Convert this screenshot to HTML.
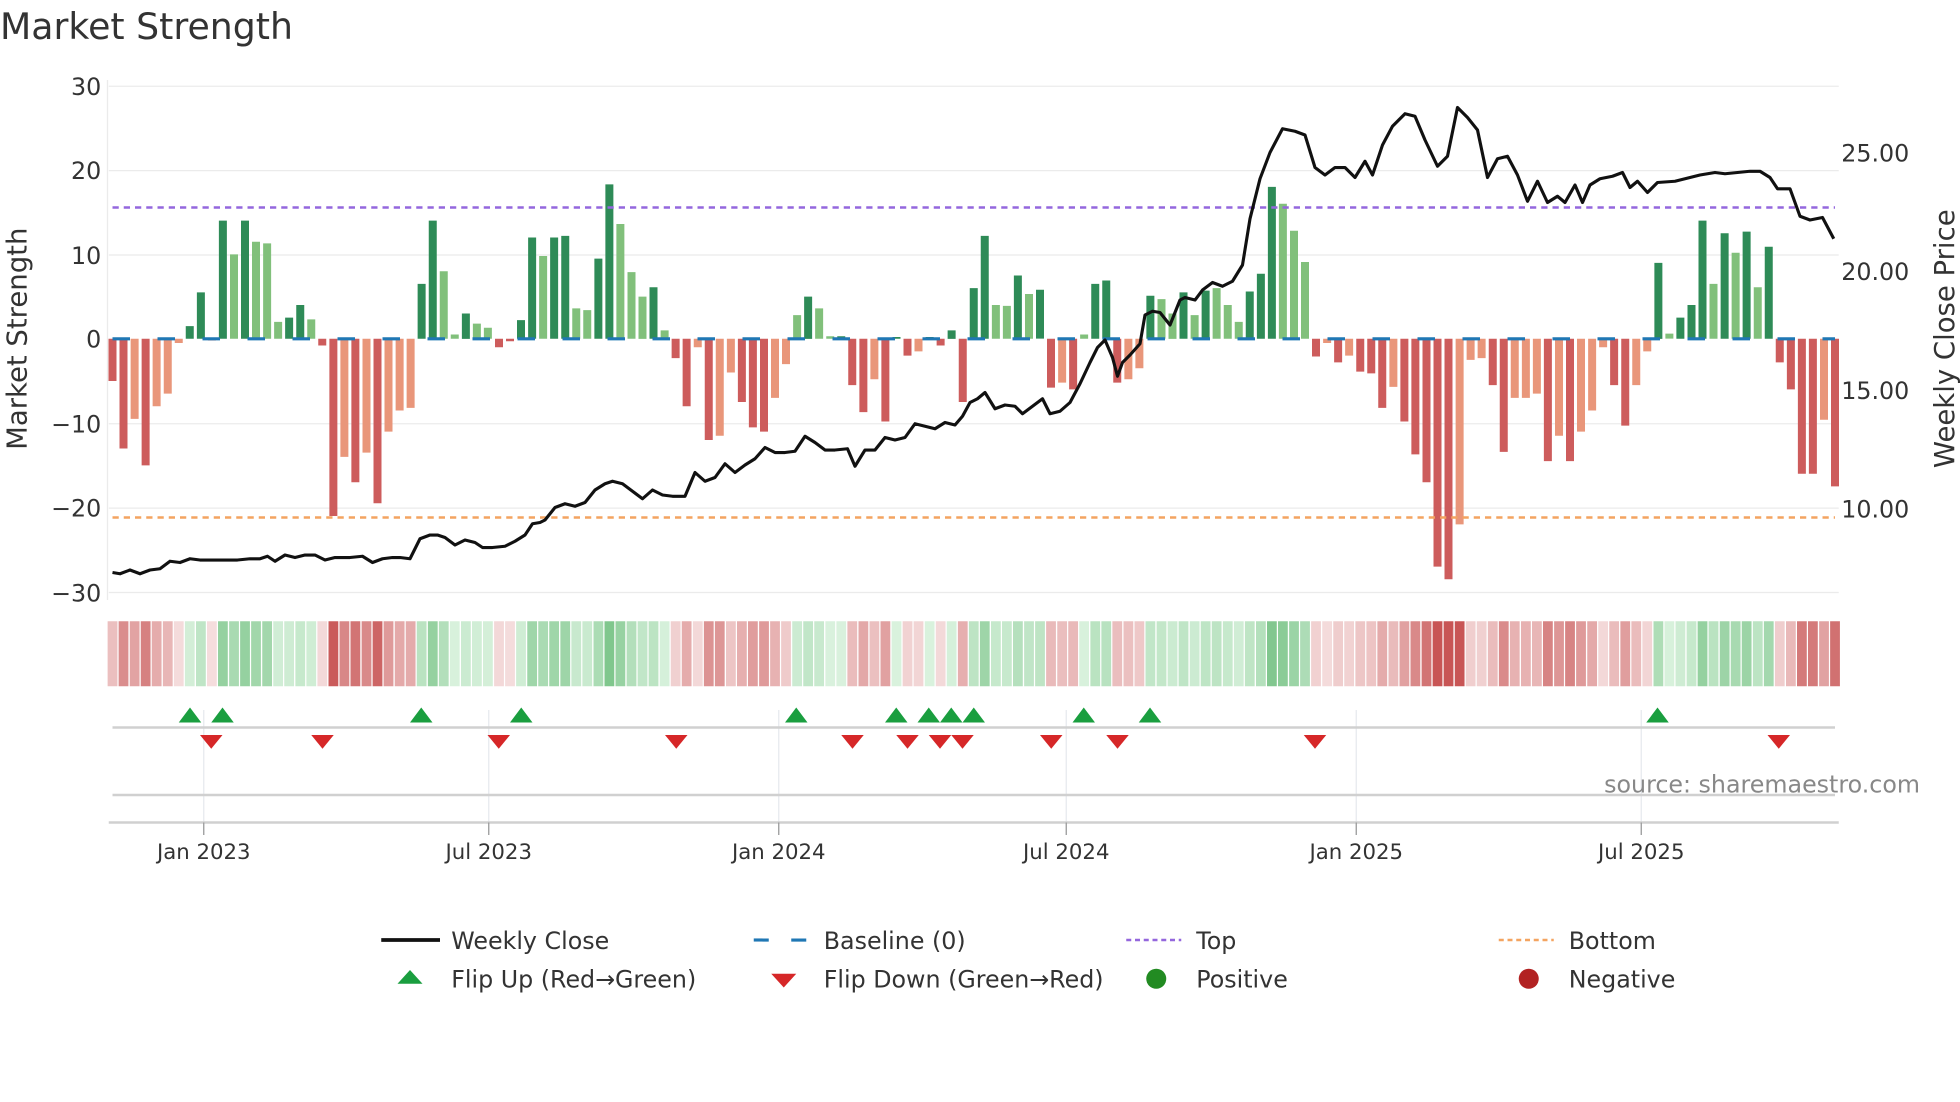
<!DOCTYPE html>
<html><head><meta charset="utf-8"><style>
html,body{margin:0;padding:0;background:#fff;}
svg{display:block;font-family:"DejaVu Sans","Liberation Sans",sans-serif;}
</style></head><body>
<svg id="s" width="1960" height="1102" viewBox="0 0 1568 881.6" xmlns="http://www.w3.org/2000/svg">
<text x="0" y="31" font-size="29" fill="#333">Market Strength</text>
<g stroke="#ebebeb" stroke-width="1">
<line x1="87" x2="1471" y1="69" y2="69"/><line x1="87" x2="1471" y1="136.5" y2="136.5"/>
<line x1="87" x2="1471" y1="204" y2="204"/><line x1="87" x2="1471" y1="339" y2="339"/>
<line x1="87" x2="1471" y1="406.5" y2="406.5"/><line x1="87" x2="1471" y1="474" y2="474"/>
<line x1="86" x2="86" y1="64" y2="480"/>
</g>
<g font-size="19" fill="#333" text-anchor="end">
<text x="81" y="76">30</text><text x="81" y="143">20</text><text x="81" y="211">10</text>
<text x="81" y="278">0</text><text x="81" y="346">−10</text><text x="81" y="413">−20</text><text x="81" y="481">−30</text>
</g>
<g font-size="19" fill="#333">
<text x="1473" y="129">25.00</text><text x="1473" y="224">20.00</text><text x="1473" y="319">15.00</text><text x="1473" y="414">10.00</text>
</g>
<text transform="translate(21,271) rotate(-90)" font-size="22" fill="#333" text-anchor="middle">Market Strength</text>
<text transform="translate(1563,271) rotate(-90)" font-size="22" fill="#333" text-anchor="middle">Weekly Close Price</text>
<g id="bars"></g>
<line x1="90" x2="1468" y1="271" y2="271" stroke="#1f77b4" stroke-width="2.5" stroke-dasharray="14,22"/>
<line x1="90" x2="1468" y1="166" y2="166" stroke="#9467dd" stroke-width="2" stroke-dasharray="5,4"/>
<line x1="90" x2="1468" y1="414" y2="414" stroke="#f4a460" stroke-width="2" stroke-dasharray="5,4"/>
<polyline id="price" fill="none" stroke="#111" stroke-width="2.5" stroke-linejoin="round"/>
<g id="strip"></g>
<g stroke="#e6e9ee" stroke-width="1">
<line x1="163" x2="163" y1="568" y2="668"/><line x1="391" x2="391" y1="568" y2="668"/>
<line x1="623" x2="623" y1="568" y2="668"/><line x1="853" x2="853" y1="568" y2="668"/>
<line x1="1085" x2="1085" y1="568" y2="668"/><line x1="1313" x2="1313" y1="568" y2="668"/>
</g>
<line x1="90" x2="1468" y1="582" y2="582" stroke="#d0d0d0" stroke-width="2"/>
<line x1="90" x2="1468" y1="636" y2="636" stroke="#d0d0d0" stroke-width="2"/>
<line x1="87" x2="1471" y1="658" y2="658" stroke="#d0d0d0" stroke-width="2"/>
<g id="flips"></g>
<g stroke="#999" stroke-width="1">
<line x1="163" x2="163" y1="658" y2="668"/><line x1="391" x2="391" y1="658" y2="668"/>
<line x1="623" x2="623" y1="658" y2="668"/><line x1="853" x2="853" y1="658" y2="668"/>
<line x1="1085" x2="1085" y1="658" y2="668"/><line x1="1313" x2="1313" y1="658" y2="668"/>
</g>
<g font-size="17" fill="#333" text-anchor="middle">
<text x="163" y="687">Jan 2023</text><text x="391" y="687">Jul 2023</text><text x="623" y="687">Jan 2024</text>
<text x="853" y="687">Jul 2024</text><text x="1085" y="687">Jan 2025</text><text x="1313" y="687">Jul 2025</text>
</g>
<text x="1536" y="634" font-size="19" fill="#888" text-anchor="end">source: sharemaestro.com</text>
<g font-size="19" fill="#333">
<line x1="305" x2="352" y1="752" y2="752" stroke="#111" stroke-width="3"/>
<text x="361" y="759">Weekly Close</text>
<line x1="603" x2="646" y1="752" y2="752" stroke="#1f77b4" stroke-width="2.5" stroke-dasharray="12,18"/>
<text x="659" y="759">Baseline (0)</text>
<line x1="901" x2="945" y1="752" y2="752" stroke="#9467dd" stroke-width="2" stroke-dasharray="4,3"/>
<text x="957" y="759">Top</text>
<line x1="1199" x2="1243" y1="752" y2="752" stroke="#f4a460" stroke-width="2" stroke-dasharray="4,3"/>
<text x="1255" y="759">Bottom</text>
<polygon points="328,776 338,787 318,787" fill="#1a9e3f"/>
<text x="361" y="790">Flip Up (Red→Green)</text>
<polygon points="617,779 637,779 627,790" fill="#d62728"/>
<text x="659" y="790">Flip Down (Green→Red)</text>
<circle cx="925" cy="783" r="8" fill="#228b22"/>
<text x="957" y="790">Positive</text>
<circle cx="1223" cy="783" r="8" fill="#b22222"/>
<text x="1255" y="790">Negative</text>
</g>
</svg>
<script>
var V=[-5,-13,-9.5,-15,-8,-6.5,-0.5,1.5,5.5,-0.2,14,10,14,11.5,11.3,2,2.5,4,2.3,-0.8,-21,-14,-17,-13.5,-19.5,-11,-8.5,-8.2,6.5,14,8,0.5,3,1.8,1.3,-1,-0.3,2.2,12,9.8,12,12.2,3.6,3.4,9.5,18.3,13.6,7.9,5,6.1,1,-2.3,-8,-1,-12,-11.5,-4,-7.5,-10.5,-11,-7,-3,2.8,5,3.6,0.3,0.3,-5.5,-8.7,-4.8,-9.8,0.2,-2,-1.5,0.2,-0.8,1,-7.5,6,12.2,4,3.9,7.5,5.3,5.8,-5.8,-5.2,-6,0.5,6.5,6.9,-5.2,-4.8,-3.5,5.1,4.7,3,5.5,2.8,5.7,6,4,2,5.6,7.7,18,16,12.8,9.1,-2.1,-0.5,-2.8,-2,-3.9,-4.1,-8.2,-5.7,-9.8,-13.7,-17,-27,-28.5,-22,-2.5,-2.3,-5.5,-13.4,-7,-7,-6.5,-14.5,-11.5,-14.5,-11,-8.5,-1,-5.5,-10.3,-5.5,-1.5,9,0.6,2.5,4,14,6.5,12.5,10.2,12.7,6.1,10.9,-2.8,-6,-16,-16,-9.6,-17.5];
var L={2:1,4:1,5:1,6:1,11:1,13:1,14:1,15:1,18:1,21:1,23:1,25:1,26:1,27:1,30:1,31:1,33:1,34:1,39:1,42:1,43:1,46:1,47:1,48:1,50:1,53:1,55:1,56:1,60:1,61:1,62:1,64:1,65:1,69:1,73:1,80:1,81:1,83:1,86:1,88:1,92:1,93:1,95:1,96:1,98:1,100:1,101:1,102:1,106:1,107:1,108:1,110:1,112:1,116:1,122:1,123:1,124:1,127:1,128:1,129:1,131:1,133:1,134:1,135:1,138:1,139:1,141:1,145:1,147:1,149:1,155:1};
var n=V.length,x0=90,dx=(1468-90)/(n-1),b='',s='';
function mix(a,c,t){return 'rgb('+[0,1,2].map(function(i){return Math.round(a[i]+(c[i]-a[i])*t)}).join(',')+')';}
for(var i=0;i<n;i++){var v=V[i],x=x0+i*dx,y=271-v*6.75,h=Math.abs(v*6.75);
var c=v>=0?(L[i]?'#81c07b':'#2e8b57'):(L[i]?'#e9967a':'#cd5c5c');
b+='<rect x="'+(x-3.2).toFixed(1)+'" y="'+Math.min(y,271).toFixed(1)+'" width="6.4" height="'+Math.max(h,0.8).toFixed(1)+'" fill="'+c+'"/>';
var t=Math.min(Math.abs(v)/22,1);
var col=v>=0?mix([218,242,222],[110,190,125],t):mix([245,222,222],[200,85,85],t);
s+='<rect x="'+(x-4.4+0.5).toFixed(1)+'" y="497" width="'+(dx-1).toFixed(2)+'" height="52" fill="'+col+'"/>';}
document.getElementById('bars').innerHTML=b;document.getElementById('strip').innerHTML=s;
var P=[90,458,96,459,104,456,112,459,120,456,128,455,136,449,144,450,152,447,160,448,176,448,190,448,200,447,208,447,214,445,220,449,228,444,236,446,244,444,252,444,260,448,268,446,280,446,290,445,298,450,306,447,314,446,320,446,328,447,336,431,344,428,350,428,356,430,364,436,372,432,380,434,386,438,394,438,404,437,412,433,420,428,426,419,432,418,436,416,444,406,452,403,460,405,468,402,476,392,484,387,490,385,498,387,506,393,514,399,522,392,530,396,538,397,548,397,556,378,564,385,572,382,580,371,588,378,596,372,604,367,612,358,620,362,628,362,636,361,644,349,652,354,660,360,668,360,678,359,684,373,692,360,700,360,708,350,716,352,724,350,732,339,740,341,748,343,756,338,764,340,770,333,776,322,782,319,788,314,796,327,804,324,812,325,818,331,826,325,834,319,840,331,848,329,856,322,864,307,872,290,878,278,884,272,890,286,894,301,898,290,904,284,912,275,916,252,922,249,928,250,936,260,940,250,944,240,948,238,956,240,962,232,970,226,978,229,986,225,994,212,1000,175,1008,143,1016,122,1026,103,1036,105,1044,108,1052,134,1060,140,1068,134,1076,134,1084,142,1092,129,1098,140,1106,116,1114,101,1124,91,1132,93,1140,112,1150,133,1158,125,1166,86,1174,94,1182,104,1190,142,1198,127,1206,125,1214,140,1222,161,1230,145,1238,162,1246,157,1252,162,1260,148,1266,162,1272,148,1280,143,1290,141,1298,138,1304,150,1310,145,1318,154,1326,146,1340,145,1352,142,1360,140,1372,138,1380,139,1390,138,1400,137,1408,137,1416,142,1422,151,1432,151,1440,173,1448,176,1458,174,1467,191];
var ps='';for(var k=0;k<P.length;k+=2)ps+=P[k]+','+P[k+1]+' ';
document.getElementById('price').setAttribute('points',ps);
var U=[152,178,337,417,637,717,743,761,779,867,920,1326],D=[169,258,399,541,682,726,752,770,841,894,1052,1423],f='';
U.forEach(function(x){f+='<polygon points="'+x+',566 '+(x+9)+',578 '+(x-9)+',578" fill="#1a9e3f"/>';});
D.forEach(function(x){f+='<polygon points="'+(x-9)+',588 '+(x+9)+',588 '+x+',599" fill="#d62728"/>';});
document.getElementById('flips').innerHTML=f;
</script>
</body></html>
